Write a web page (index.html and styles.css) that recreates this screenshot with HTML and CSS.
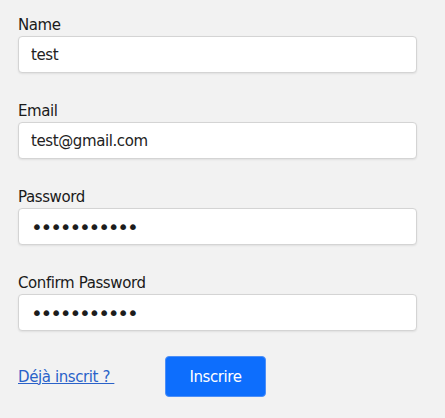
FILE: index.html
```html
<!DOCTYPE html>
<html lang="fr">
<head>
<meta charset="utf-8">
<title>Inscription</title>
<link rel="stylesheet" href="styles.css">
</head>
<body>
<form class="form">
  <div class="group">
    <label class="label" for="name">Name</label>
    <input class="input" id="name" type="text" value="test">
  </div>
  <div class="group">
    <label class="label" for="email">Email</label>
    <input class="input" id="email" type="text" value="test@gmail.com">
  </div>
  <div class="group">
    <label class="label" for="pw">Password</label>
    <input class="input input-pw" id="pw" type="password" value="12345678901">
  </div>
  <div class="group">
    <label class="label" for="pw2">Confirm Password</label>
    <input class="input input-pw" id="pw2" type="password" value="12345678901">
  </div>
  <div class="actions">
    <a class="link" href="#">Déjà inscrit ? </a>
    <button class="btn" type="button">Inscrire</button>
  </div>
</form>
</body>
</html>
```

FILE: styles.css
```css
html, body {
  margin: 0;
  padding: 0;
  background: #f2f2f2;
}
body {
  font-family: "DejaVu Sans", Verdana, sans-serif;
  font-size: 15px;
  letter-spacing: -0.4px;
  color: #1e1e1e;
}
.form {
  display: flex;
  flex-direction: column;
  padding: 16px 28px 0 18px;
  width: 399px;
}
.group {
  display: flex;
  flex-direction: column;
  gap: 2px;
  margin-bottom: 29px;
}
.label {
  display: block;
  line-height: 19px;
  height: 18px;
  color: #1a1a1a;
}
.input {
  box-sizing: border-box;
  height: 37px;
  width: 100%;
  border: 1px solid #d4d4d4;
  border-radius: 4px;
  background: #fff;
  padding: 0 12px;
  font-family: inherit;
  font-size: 15px;
  letter-spacing: -0.4px;
  color: #222;
  box-shadow: 0 1px 2px rgba(0,0,0,0.08);
  outline: none;
}
.input-pw {
  font-size: 20px;
  letter-spacing: -2.2px;
  padding-left: 12px;
  color: #1c1c1c;
}
.actions {
  display: flex;
  align-items: center;
  margin-top: -4px;
}
.link {
  color: #2a62c9;
  text-decoration: underline;
  white-space: pre;
  width: 147px;
}
.btn {
  box-sizing: border-box;
  width: 101px;
  height: 41px;
  border: 1px solid #4d8ff7;
  border-radius: 4px;
  background: #0d6efd;
  color: #fff;
  font-family: inherit;
  font-size: 15px;
  letter-spacing: -0.4px;
  padding: 0;
}
```
